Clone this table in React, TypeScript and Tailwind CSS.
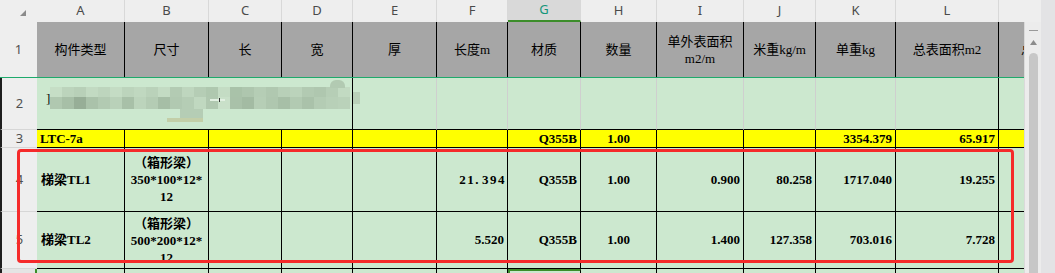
import React from "react";

const WC = [
  "w-[88px]",
  "w-[84px]",
  "w-[73px]",
  "w-[71px]",
  "w-[84px]",
  "w-[71px]",
  "w-[73px]",
  "w-[76px]",
  "w-[87px]",
  "w-[72px]",
  "w-[80px]",
  "w-[103px]",
  "w-[80px]",
];
const LETTERS = ["A", "B", "C", "D", "E", "F", "G", "H", "I", "J", "K", "L"];

const SERIF = "font-['Liberation_Serif','Noto_Sans_CJK_SC',serif]";
const SANS = "font-['Noto_Sans','Noto_Sans_CJK_SC',sans-serif]";

const HEADERS: React.ReactNode[] = [
  "构件类型",
  "尺寸",
  "长",
  "宽",
  "厚",
  "长度m",
  "材质",
  "数量",
  <span key="i" className="text-center leading-[17px]">
    单外表面积
    <br />
    m2/m
  </span>,
  "米重kg/m",
  "单重kg",
  "总表面积m2",
  "总重kg",
];

type Align = "l" | "r" | "c";
type CellDef = { t?: React.ReactNode; a?: Align; tight?: boolean };

function alignCls(a?: Align, tight?: boolean) {
  if (a === "l") return "justify-start pl-[3px]";
  if (a === "r") return tight ? "justify-end pr-[1px]" : "justify-end pr-[3px]";
  return "justify-center";
}

function RowHead({ n, h, extra = "" }: { n: string; h: string; extra?: string }) {
  return (
    <div
      className={`w-[37px] shrink-0 ${h} flex items-center justify-center bg-[#eeeeee] text-[13px] text-[#505050] border-l-2 border-l-[#1e1e1e] border-b border-b-[#d6d6d6] ${SANS} ${extra}`}
    >
      {n}
    </div>
  );
}

function DataRow({
  n,
  h,
  bg,
  cells,
}: {
  n: string;
  h: string;
  bg: string;
  cells: CellDef[];
}) {
  return (
    <div className={`flex ${h}`}>
      <RowHead n={n} h={h} />
      {cells.map((c, i) => (
        <div
          key={i}
          className={`${WC[i]} shrink-0 h-full flex items-center ${bg} border-r border-b border-black ${alignCls(
            c.a,
            c.tight
          )} ${SERIF} font-bold text-[13px] text-black whitespace-nowrap`}
        >
          {c.t}
        </div>
      ))}
    </div>
  );
}

const UP = [
  "#c6dec6", "#bcd4bc", "#b8d0b8", "#c2dac2", "#bdd5bd", "#c4dcc4", "#bcd4bc", "#c0d8c0",
  "#bad2ba", "#c3dbc3", "#b3cbb3", "#bed6be", "#b5cdb5", "#afc8af", "#c4dcc4", "#a9c2a9",
  "#aec6ae", "#b5cdb5", "#b0c8b0", "#b8d0b8", "#bbd3bb", "#b2cab2", "#afc7af", "#b6ceb6",
  "#c2dac2",
];
const LO = [
  "#b0c8b0", "#a7bfa7", "#97ae97", "#aac2aa", "#b2cab2", "#b9d1b9", "#a8c0a8", "#bcd4bc",
  "#b4ccb4", "#a6bea6", "#b1c9b1", "#b5cdb5", "#c0d8c0", "#b0c8b0", "#c9e0c9", "#a9c1a9",
  "#a3bba3", "#b6ceb6", "#afc7af", "#a7bfa7", "#b2cab2", "#aac2aa", "#b4ccb4", "#b8d0b8",
  "#bad2ba",
];

function Mosaic() {
  return (
    <div className="absolute left-[13px] top-[9px] flex flex-col pointer-events-none">
      <div className="flex">
        {UP.map((c, i) => (
          <div key={i} className="w-[12px] h-[10px]" style={{ background: c }} />
        ))}
      </div>
      <div className="flex">
        {LO.map((c, i) => (
          <div key={i} className="w-[12px] h-[12px]" style={{ background: c }} />
        ))}
      </div>
      <div className="flex">
        <div className="w-[130px]" />
        <div className="w-[23px] h-[9px] bg-[#b5cdb5]" />
      </div>
      <div className="flex">
        <div className="w-[117px]" />
        <div className="w-[36px] h-[4px] bg-[#c3cfa8]" />
      </div>
    </div>
  );
}

export default function App() {
  const row3: CellDef[] = [
    { t: "LTC-7a", a: "l" },
    {},
    {},
    {},
    {},
    {},
    { t: "Q355B", a: "r" },
    { t: "1.00", a: "c" },
    {},
    {},
    { t: "3354.379", a: "r" },
    { t: "65.917", a: "r" },
    {},
  ];
  const size = (a: string) => (
    <span className="text-center leading-[17px]">
      （箱形梁）
      <br />
      {a}
      <br />
      12
    </span>
  );
  const row4: CellDef[] = [
    { t: <span className="pl-[1px]">梯梁TL1</span>, a: "l" },
    { t: size("350*100*12*"), a: "c" },
    {},
    {},
    {},
    {
      t: (
        <span className="tracking-[1.5px]">
          21.<span className="ml-[2px]">394</span>
        </span>
      ),
      a: "r",
      tight: true,
    },
    { t: "Q355B", a: "r" },
    { t: "1.00", a: "c" },
    { t: "0.900", a: "r" },
    { t: "80.258", a: "r" },
    { t: "1717.040", a: "r" },
    { t: "19.255", a: "r" },
    {},
  ];
  const row5: CellDef[] = [
    { t: <span className="pl-[1px]">梯梁TL2</span>, a: "l" },
    { t: size("500*200*12*"), a: "c" },
    {},
    {},
    {},
    { t: "5.520", a: "r" },
    { t: "Q355B", a: "r" },
    { t: "1.00", a: "c" },
    { t: "1.400", a: "r" },
    { t: "127.358", a: "r" },
    { t: "703.016", a: "r" },
    { t: "7.728", a: "r" },
    {},
  ];
  const lightR = [false, false, false, false, false, false, false, true];

  return (
    <div className="relative w-[1055px] h-[273px] overflow-hidden bg-[#e3e3e5] flex">
      <div className="w-[1041px] flex flex-col">
        {/* column letters */}
        <div className="flex h-[22px] bg-[#eeeeee] shrink-0">
          <div className="w-[37px] shrink-0 flex items-center justify-center">
            <svg width="8" height="8" viewBox="0 0 8 8" className="ml-[8px] mt-[3px]">
              <polygon points="7,1 7,7 1,7" fill="#8a8a8a" />
            </svg>
          </div>
          {LETTERS.map((l, i) => (
            <div
              key={l}
              className={`${WC[i]} shrink-0 h-full flex items-center justify-center text-[13px] ${SANS} border-r border-[#d8d8d8] ${
                l === "G"
                  ? "bg-[#d9d9d9] text-[#16967a] border-b-2 border-b-[#3c8d2a]"
                  : "text-[#4a4a4a]"
              }`}
            >
              {l}
            </div>
          ))}
          <div className="flex-1" />
        </div>

        <div className="flex flex-1">
          {/* grid */}
          <div className="w-[1024px] overflow-hidden flex flex-col">
            {/* row 1 */}
            <div className="flex h-[56px] w-max border-b border-[#1eaa6c]">
              <div
                className={`w-[37px] shrink-0 h-full flex items-center justify-center bg-[#eeeeee] text-[13px] text-[#505050] ${SANS}`}
              >
                1
              </div>
              {HEADERS.map((t, i) => (
                <div
                  key={i}
                  className={`${WC[i]} shrink-0 h-full flex items-center ${
                    i === 12 ? "justify-start pl-[22px]" : "justify-center"
                  } bg-[#a6a6a6] border-r border-black text-[13px] text-black ${SERIF} whitespace-nowrap`}
                >
                  {t}
                </div>
              ))}
            </div>

            {/* row 2 */}
            <div className="flex h-[52px] w-max">
              <RowHead n="2" h="h-[52px]" />
              <div className="relative w-[316px] shrink-0 h-full bg-[#cce8cf] border-r border-b border-black">
                <Mosaic />
                <span className={`absolute left-[9px] top-[11px] text-[13px] text-black ${SERIF}`}>]</span>
                <div className="absolute left-[173px] top-[21px] w-[15px] h-[2px] bg-[#e2f0e2]" />
                <div className="absolute left-[182px] top-[20px] w-[1px] h-[4px] bg-[#333333]" />
                <div className="absolute left-[293px] top-[2px] w-[15px] h-[8px] rounded-t-[6px] bg-[#b2cab2]" />
              </div>
              {WC.slice(4).map((w, i) => (
                <div
                  key={i}
                  className={`${w} shrink-0 h-full bg-[#cce8cf] border-b border-b-black border-r ${
                    lightR[i] ? "border-r-black" : "border-r-[#cfcfcf]"
                  }`}
                >
                  {i === 0 && <div className="mt-[14px] w-[7px] h-[12px] bg-[#b9d1b9]" />}
                </div>
              ))}
            </div>

            <div className="w-max">
              <DataRow n="3" h="h-[18px]" bg="bg-[#ffff00]" cells={row3} />
              <DataRow n="4" h="h-[64px]" bg="bg-[#cce8cf]" cells={row4} />
              <DataRow n="5" h="h-[57px]" bg="bg-[#cce8cf]" cells={row5} />
              {/* row 6 */}
              <div className="flex h-[30px]">
                <div className="w-[37px] shrink-0 h-full bg-[#e4e4e4] border-l-2 border-l-[#1e1e1e] border-r-2 border-r-[#3c8d2a]" />
                {WC.map((w, i) => (
                  <div
                    key={i}
                    className={`${w} shrink-0 h-full bg-[#cce8cf] border-r border-black ${
                      i === 6 ? "border-t-2 border-t-[#3c8d2a] border-l-2 border-l-[#3c8d2a]" : ""
                    }`}
                  />
                ))}
              </div>
            </div>
          </div>

          {/* vertical scrollbar */}
          <div className="w-[17px] shrink-0 bg-[#ececec] border-l border-[#dadada] flex flex-col items-center">
            <div className="mt-[8px] w-[9px] h-[1px] bg-[#9a9a9a]" />
            <svg width="7" height="5" viewBox="0 0 7 5" className="mt-[9px]">
              <polygon points="3.5,0 7,5 0,5" fill="#8c8c8c" />
            </svg>
            <div className="mt-[8px] w-[9px] flex-1 rounded-t-full bg-[#c7c7c7]" />
          </div>
        </div>
      </div>

      {/* red annotation box */}
      <div className="absolute left-[17px] top-[149px] w-[997px] h-[114px] border-[3px] border-[#f52a2a] rounded-[4px] pointer-events-none" />
    </div>
  );
}
